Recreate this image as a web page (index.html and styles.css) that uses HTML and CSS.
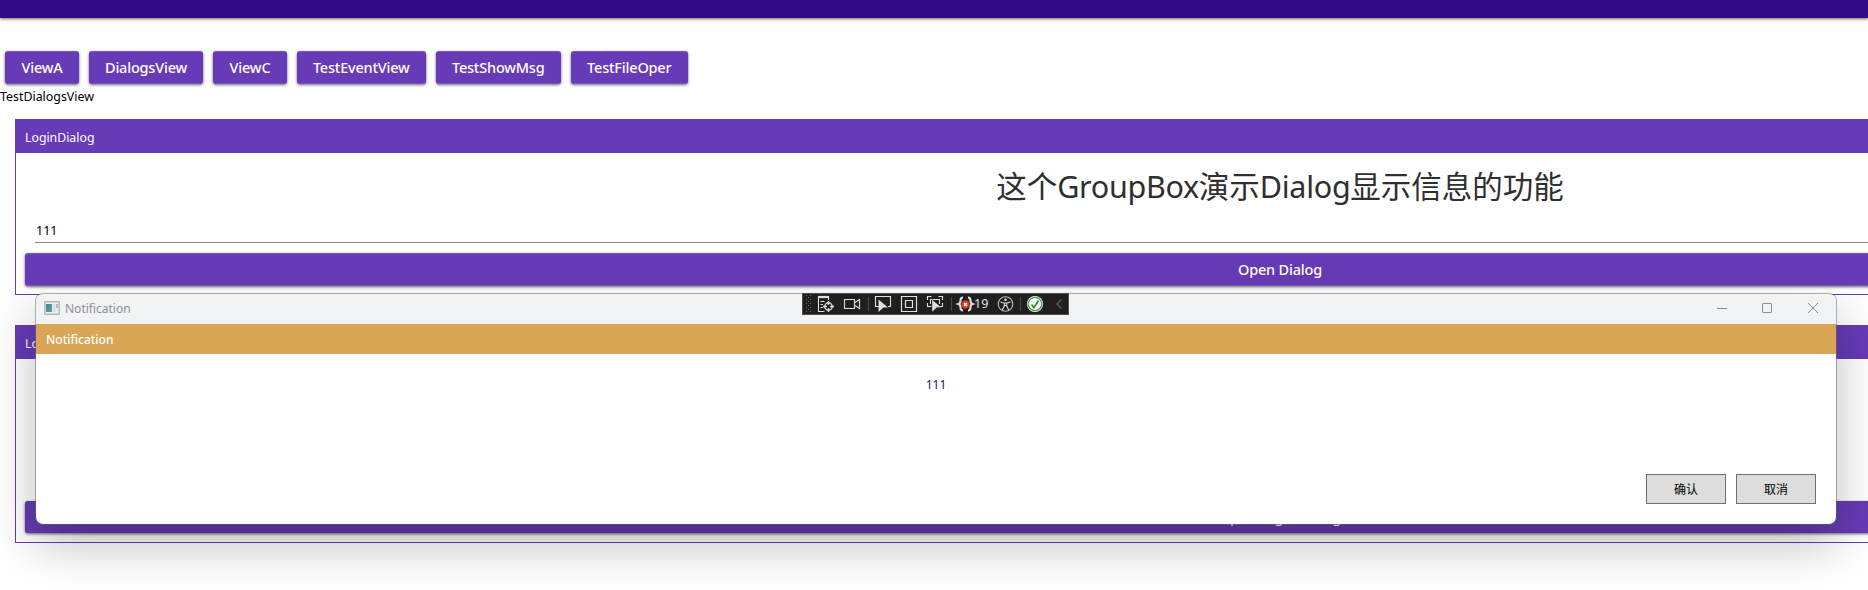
FILE: index.html
```html
<!DOCTYPE html>
<html lang="zh-CN">
<head>
<meta charset="utf-8">
<title>TestDialogsView</title>
<link rel="stylesheet" href="styles.css">
</head>
<body>
<div class="app">
  <header class="appbar"></header>
  <nav class="nav">
    <button class="btn w74">ViewA</button>
    <button class="btn w114">DialogsView</button>
    <button class="btn w74">ViewC</button>
    <button class="btn w129">TestEventView</button>
    <button class="btn w126">TestShowMsg</button>
    <button class="btn w117">TestFileOper</button>
  </nav>
  <div class="view-name"><span>TestDialogsView</span></div>
  <section class="group">
    <div class="group-head"><span>LoginDialog</span></div>
    <h1 class="title">这个<span class="latin">GroupBox</span>演示<span class="latin">Dialog</span>显示信息的功能</h1>
    <div class="field">111</div>
    <button class="btn wide">Open Dialog</button>
  </section>
  <section class="group second">
    <div class="group-head"><span>LoginDialog</span></div>
    <button class="btn wide">Open Login Dialog</button>
  </section>
</div>

<div class="window">
  <div class="titlebar">
    <svg class="app-icon" width="16" height="14" viewBox="0 0 16 14">
      <defs><linearGradient id="g" x1="0" y1="0" x2="1" y2="1"><stop offset="0" stop-color="#4d7fa8"/><stop offset="1" stop-color="#54a883"/></linearGradient></defs>
      <rect x=".75" y=".75" width="14.5" height="12.5" fill="#eceeef" stroke="#b3b8bc" stroke-width="1.5"/>
      <rect x="2" y="3" width="6" height="8" fill="url(#g)"/>
      <rect x="9" y="3" width="2.5" height="8" fill="#dcdfe1"/>
      <rect x="12" y="3" width="2" height="4" fill="#a3bfce"/>
    </svg>
    <span class="caption">Notification</span>
    <svg class="controls" width="104" height="12" viewBox="0 0 104 12" fill="none" stroke="#8b8d90">
      <path d="M1 6.500h10"/>
      <rect x="46.500" y="1.500" width="9" height="9" rx=".5"/>
      <path d="M92 1l10 10M102 1l-10 10"/>
    </svg>
  </div>
  <div class="banner"><span>Notification</span></div>
  <div class="message">111</div>
  <div class="actions">
    <button class="plain">确认</button>
    <button class="plain">取消</button>
  </div>
</div>

<div class="debugbar">
  <svg width="267" height="22" viewBox="0 0 267 22" fill="none" stroke="#dedede" stroke-width="1.1">
    <g stroke="#6b6b6b" stroke-width="1" stroke-dasharray="1 3">
      <path d="M4.500 2v18M8.500 2v18M6.500 4v16"/>
    </g>
    <path d="M16 4h11" stroke-width="2.200"/>
    <path d="M16.500 4v14.500h6M26.500 4v3M18.500 8.500h4M18.500 11.500h2.500M18.500 14.500h2.500"/>
    <circle cx="26.500" cy="13.500" r="3.700" stroke-width="1.400"/>
    <path d="M26.500 8v4M26.500 15v4M21 13.500h4M28 13.500h4" stroke-width="1.300"/>
    <path d="M42.500 6.500h10v9h-10zM53 9.500l4.500-3v9l-4.500-3"/>
    <path d="M66.500 4v14M149.500 4v14M218.500 4v14" stroke="#484848"/>
    <path d="M77 13.500h-3.500v-10h15v10H86"/>
    <path d="M76.500 6.500l9.500 8h-4.500l-5 4.500z" fill="#dedede" stroke="none"/>
    <path d="M99.500 3.500h15v15h-15zM103.500 7.500h7v7h-7z" stroke-width="1.200"/>
    <path d="M125.500 7V3.500h4M136.500 3.500h4V7M140.500 10v3.500h-3M125.500 10v3.500h4M128.500 11V6.500h9V11"/>
    <path d="M130 6.500l9.500 8H135l-5 4.500z" fill="#dedede" stroke="#1f1f1f" stroke-width=".4"/>
    <path d="M161 4.500c-2.200 0-2.500 1-2.500 3s-.5 3-2 3.500c1.500.5 2 1.500 2 3.500s.3 3 2.500 3M166 4.500c2.200 0 2.500 1 2.500 3s.5 3 2 3.500c-1.500.5-2 1.500-2 3.500s-.3 3-2.500 3" stroke-width="2.100"/>
    <circle cx="163.500" cy="11.500" r="4.200" fill="#e23428" stroke="none"/>
    <path d="M162 10l3 3M165 10l-3 3" stroke="#fff" stroke-width="1.300"/>
    <circle cx="203.500" cy="11" r="7.300" stroke="#bdbdbd"/>
    <circle cx="203.500" cy="6.800" r="1.300" fill="#dedede" stroke="none"/>
    <path d="M198.500 9l3.500 1h3l3.500-1M202.300 10v3l-2 4M204.700 10v3l2 4M202 12.500h3"/>
    <circle cx="233" cy="11" r="8" fill="#fff" stroke="none"/>
    <circle cx="233" cy="11" r="6.700" stroke="#459849" stroke-width="1.200"/>
    <path d="M229.500 11.500l2.500 3 4.500-7" stroke="#2f8a36" stroke-width="1.800"/>
    <path d="M259.500 6.500l-4.500 4.500 4.500 4.500" stroke="#696969"/>
  </svg>
  <span class="count">19</span>
</div>
</body>
</html>
```
FILE: styles.css
```css
* { box-sizing: border-box; }
html, body { margin: 0; height: 590px; overflow: hidden; background: #fff; }
body { position: relative; font-family: "Noto Sans", "Noto Sans CJK SC", sans-serif; font-size: 12px; color: #000; }
button { font-family: inherit; margin: 0; padding: 0; border: 0; }
.app { width: 100%; height: 590px; overflow: hidden; }
.appbar { height: 18px; background: #310a85; box-shadow: 0 1px 3px rgba(0,0,0,.6); }
.nav { display: flex; gap: 10px; padding: 33px 5px 0; height: 66px; }
.btn { height: 33px; border: 1px solid #7d58c0; border-width: 1px 0; border-radius: 3px; background: #673ab7; color: #fff; font-size: 14.500px; font-weight: 500; letter-spacing: -.2px; line-height: 31px; text-align: center; white-space: nowrap; box-shadow: 0 1px 3px rgba(0,0,0,.6); }
.w74 { width: 74px; }
.w114 { width: 114px; }
.w129 { width: 128.500px; }
.w126 { width: 125.500px; }
.w117 { width: 116.500px; }
.view-name { height: 35px; padding-top: 4px; font-size: 12.400px; line-height: 17px; }
.group { width: 2530px; height: 176px; margin-left: 15px; border: 1px solid #673ab7; display: flex; flex-direction: column; padding: 0 9px 8px; background: #fff; }
.group-head { height: 33px; flex: none; margin: 0 -9px; padding: 2px 9px 0; background: #673ab7; color: #fff; font-size: 12.300px; line-height: 31px; }
.title { margin: 11px 0 0; height: 44px; line-height: 44px; font-size: 30.500px; font-weight: 400; text-align: center; color: #2f2f2f; }
.latin { letter-spacing: -.3px; }
.field { height: 35px; flex: none; margin: 0 10px; border-bottom: 1px solid #858585; padding: 14px 1px 0; font-size: 12.500px; line-height: 17px; }
.wide { width: 100%; flex: none; margin-top: auto; }
.second { margin-top: 30px; height: 218px; padding-bottom: 9px; }
.second .wide { height: 32px; border-color: #673ab7; letter-spacing: -.4px; line-height: 29px; }
.window { position: absolute; left: 35px; top: 293px; width: 1802px; height: 232px; display: flex; flex-direction: column; background: #fff; background-clip: padding-box; border: 1px solid rgba(100,100,100,.5); border-radius: 8px; overflow: hidden; box-shadow: 0 20px 48px rgba(0,0,0,.25); }
.titlebar { height: 30px; flex: none; display: flex; align-items: center; background: #f1f3f5; padding: 0 16px 2px 8px; }
.caption { margin-left: 5px; font-size: 12px; color: #8f9194; flex: 1; }
.banner { height: 30px; flex: none; background: #d9a655; color: #fff; font-size: 12px; font-weight: 500; line-height: 31px; padding-left: 10px; }
.message { padding-top: 22px; text-align: center; font-size: 12px; line-height: 17px; color: #102060; }
.actions { margin-top: auto; display: flex; justify-content: flex-end; gap: 10px; padding: 0 20px 20px; }
.plain { width: 80px; height: 30px; background: #ddd; border: 1px solid #707070; font-family: "Noto Sans CJK SC", sans-serif; font-size: 12px; line-height: 26px; padding-bottom: 1px; color: #000; }
.debugbar { position: absolute; left: 802px; top: 293px; width: 267px; height: 22px; background: #1f1f1f; border: 1px solid #505050; }
.debugbar svg { display: block; margin: -1px; }
.count { position: absolute; left: 171px; top: 0; font-size: 12.500px; line-height: 19px; color: #e0e0e0; }
```
